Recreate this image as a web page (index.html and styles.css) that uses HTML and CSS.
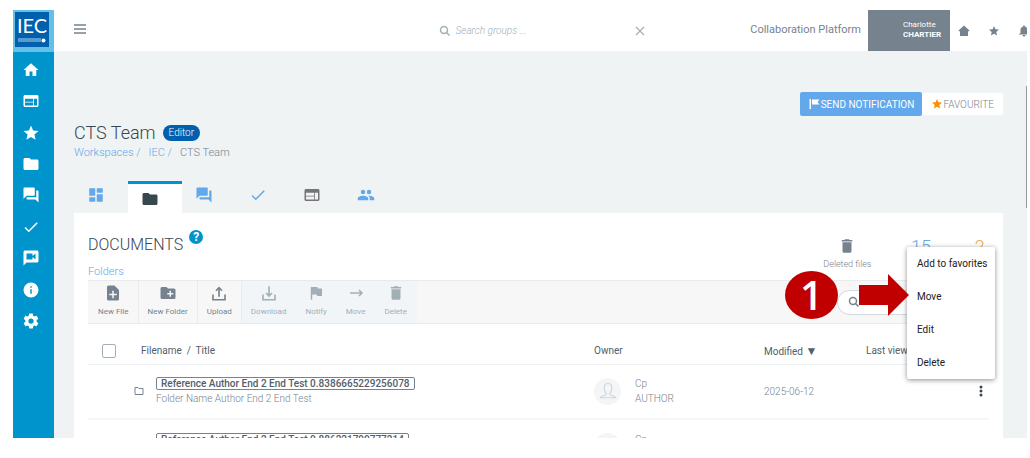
FILE: index.html
```html
<!DOCTYPE html>
<html lang="en">
<head>
    <meta charset="UTF-8">
    <meta name="viewport" content="width=device-width, initial-scale=1.0">
    <title>CTS Team - Collaboration Platform</title>
    <link rel="stylesheet" href="styles.css">
</head>
<body>
    <!-- Shared icons -->
    <svg class="icon-defs" aria-hidden="true">
        <symbol id="home" viewBox="0 0 24 24"><path d="M10 20v-6h4v6h5v-8h3L12 3 2 12h3v8z"/></symbol>
        <symbol id="web" viewBox="0 0 24 24"><path d="M20 4H4c-1.100 0-2 .9-2 2v12c0 1.100.9 2 2 2h16c1.100 0 2-.9 2-2V6c0-1.100-.9-2-2-2zm-5 14H4v-4h11v4zm0-5H4V9h11v4zm5 5h-4V9h4v9z"/></symbol>
        <symbol id="star" viewBox="0 0 24 24"><path d="M12 17.270 18.180 21l-1.640-7.030L22 9.240l-7.190-.61L12 2 9.190 8.630 2 9.240l5.460 4.730L5.820 21z"/></symbol>
        <symbol id="folder" viewBox="0 0 24 24"><path d="M10 4H4c-1.100 0-2 .9-2 2v12c0 1.100.9 2 2 2h16c1.100 0 2-.9 2-2V8c0-1.100-.9-2-2-2h-8z"/></symbol>
        <symbol id="forum" viewBox="0 0 24 24"><path d="M21 6h-2v9H6v2c0 .55.450 1 1 1h11l4 4V7c0-.55-.45-1-1-1zm-4 6V3c0-.55-.45-1-1-1H3c-.55 0-1 .45-1 1v14l4-4h10c.55 0 1-.45 1-1z"/></symbol>
        <symbol id="check" viewBox="0 0 24 24"><path d="M9 16.170 4.830 12l-1.420 1.410L9 19 21 7l-1.410-1.410z"/></symbol>
        <symbol id="video" viewBox="0 0 24 24"><path d="M20 2H4c-1.100 0-2 .9-2 2v18l4-4h14c1.100 0 2-.9 2-2V4c0-1.100-.9-2-2-2zm-2 12-4-3.200V14H6V6h8v3.200L18 6v8z"/></symbol>
        <symbol id="info" viewBox="0 0 24 24"><path d="M12 2a10 10 0 1 0 0 20 10 10 0 0 0 0-20zm1 15h-2v-6h2v6zm0-8h-2V7h2v2z"/></symbol>
        <symbol id="gear" viewBox="0 0 24 24"><path d="M19.430 12.980c.04-.32.070-.64.070-.98s-.03-.66-.07-.98l2.110-1.650c.19-.15.240-.42.120-.64l-2-3.460c-.12-.22-.39-.3-.61-.22l-2.490 1c-.52-.4-1.080-.73-1.690-.98l-.38-2.650C14.460 2.180 14.250 2 14 2h-4c-.25 0-.46.180-.49.420l-.38 2.650c-.61.250-1.170.590-1.690.980l-2.490-1c-.23-.09-.49 0-.61.220l-2 3.460c-.13.220-.07.490.12.640l2.110 1.650c-.04.320-.07.650-.07.980s.03.660.070.980l-2.110 1.650c-.19.150-.24.420-.12.640l2 3.460c.12.220.390.300.610.220l2.490-1c.52.400 1.080.730 1.690.980l.38 2.650c.03.240.240.420.490.420h4c.25 0 .46-.18.490-.42l.38-2.650c.61-.25 1.170-.59 1.690-.98l2.490 1c.23.090.490 0 .61-.22l2-3.460c.12-.22.070-.49-.12-.64l-2.110-1.650zM12 15.500a3.500 3.500 0 1 1 0-7 3.500 3.500 0 0 1 0 7z"/></symbol>
        <symbol id="dashboard" viewBox="0 0 24 24"><path d="M3 13h8V3H3v10zm0 8h8v-6H3v6zm10 0h8V11h-8v10zm0-18v6h8V3h-8z"/></symbol>
        <symbol id="people" viewBox="0 0 24 24"><path d="M16 11a3 3 0 1 0 0-6 3 3 0 0 0 0 6zm-8 0a3 3 0 1 0 0-6 3 3 0 0 0 0 6zm0 2c-2.330 0-7 1.170-7 3.500V19h14v-2.500C15 14.170 10.330 13 8 13zm8 0c-.29 0-.62.020-.97.050 1.160.84 1.970 1.970 1.970 3.450V19h6v-2.500c0-2.330-4.670-3.500-7-3.500z"/></symbol>
        <symbol id="new-file" viewBox="0 0 24 24"><path d="M14 2H6a2 2 0 0 0-2 2v16c0 1.100.9 2 2 2h12a2 2 0 0 0 2-2V8l-6-6zm3 13h-4v4h-2v-4H7v-2h4V9h2v4h4v2z"/></symbol>
        <symbol id="new-folder" viewBox="0 0 24 24"><path d="M20 6h-8l-2-2H4a2 2 0 0 0-2 2v12c0 1.100.9 2 2 2h16a2 2 0 0 0 2-2V8a2 2 0 0 0-2-2zm-1 8h-3v3h-2v-3h-3v-2h3V9h2v3h3v2z"/></symbol>
        <symbol id="upload" viewBox="0 0 24 24"><path d="M4 14v7h16v-7M12 17V5M8 9l4-4 4 4" fill="none" stroke="currentColor" stroke-width="2.200"/></symbol>
        <symbol id="download" viewBox="0 0 24 24"><path d="M4 14v7h16v-7M12 3v13M8 12l4 4 4-4" fill="none" stroke="currentColor" stroke-width="2.200"/></symbol>
        <symbol id="flag" viewBox="0 0 24 24"><path d="M14.400 6 14 4H5v17h2v-7h6l.4 2H20V6z"/></symbol>
        <symbol id="arrow" viewBox="0 0 24 24"><path d="M4 12h15M16 8l4 4-4 4" fill="none" stroke="currentColor" stroke-width="2"/></symbol>
        <symbol id="trash" viewBox="0 0 24 24"><path d="M6 19c0 1.100.9 2 2 2h8c1.100 0 2-.9 2-2V7H6v12zM19 4h-3.500l-1-1h-5l-1 1H5v2h14z"/></symbol>
        <symbol id="search" viewBox="0 0 24 24"><path d="M10 3a7 7 0 1 0 0 14 7 7 0 0 0 0-14zM15 15l6 6" fill="none" stroke="currentColor" stroke-width="3"/></symbol>
        <symbol id="bell" viewBox="0 0 24 24"><path d="M12 23a3 3 0 0 0 3-3H9a3 3 0 0 0 3 3zm7-7v-6c0-3.500-2-6-5.500-7V1h-3v2C7 4 5 6.500 5 10v6l-3 2v1h20v-1z"/></symbol>
        <symbol id="user" viewBox="0 0 24 24"><path d="M12 2c-4 0-5 3-5 6 0 4 2 7 3 8 0 2-7 2-8 5h20c-1-3-8-3-8-5 1-1 3-4 3-8 0-3-1-6-5-6z" fill="none" stroke="currentColor" stroke-width="1.500"/></symbol>
    </svg>

    <div class="app">
        <aside class="sidebar">
            <a class="logo" href="#" aria-label="IEC">
                <span class="logo-box">
                    <span class="logo-text">IEC</span>
                    <svg class="logo-line" viewBox="0 0 28 5"><path d="M0 1h23M0 3h23" stroke="#b5d3ee"/><circle cx="25.500" cy="2.500" r="2" fill="#fff"/></svg>
                </span>
            </a>
            <nav class="side-nav">
                <a href="#" aria-label="Home"><svg class="icon"><use href="#home"/></svg></a>
                <a href="#" aria-label="Workspaces"><svg class="icon"><use href="#web"/></svg></a>
                <a href="#" aria-label="Favourites"><svg class="icon"><use href="#star"/></svg></a>
                <a href="#" aria-label="Documents"><svg class="icon"><use href="#folder"/></svg></a>
                <a href="#" aria-label="Discussions"><svg class="icon"><use href="#forum"/></svg></a>
                <a href="#" aria-label="Tasks"><svg class="icon"><use href="#check"/></svg></a>
                <a href="#" aria-label="Meetings"><svg class="icon"><use href="#video"/></svg></a>
                <a href="#" aria-label="Information"><svg class="icon"><use href="#info"/></svg></a>
                <a href="#" aria-label="Settings"><svg class="icon"><use href="#gear"/></svg></a>
            </nav>
        </aside>

        <div class="page">
            <header class="topbar">
                <button class="burger" aria-label="Menu">
                    <svg viewBox="0 0 12 10"><path d="M0 1h12M0 5h12M0 9h12" stroke="currentColor" stroke-width="1.500"/></svg>
                </button>
                <form class="group-search">
                    <svg class="icon-small"><use href="#search"/></svg>
                    <input type="text" placeholder="Search groups ..." aria-label="Search groups">
                    <button type="button" aria-label="Clear">
                        <svg class="clear" viewBox="0 0 10 10"><path d="M1 1l8 8M9 1l-8 8" stroke="currentColor" stroke-width="1.200"/></svg>
                    </button>
                </form>
                <div class="platform">Collaboration Platform</div>
                <div class="user">Charlotte<strong>CHARTIER</strong></div>
                <div class="top-links">
                    <a href="#" aria-label="Home"><svg class="icon-small" viewBox="0 0 24 24"><path d="M12 1 1 11l1 2 2-1v10h16V12l2 1 1-2z"/></svg></a>
                    <a href="#" aria-label="Favourites"><svg class="icon-small"><use href="#star"/></svg></a>
                    <a href="#" aria-label="Notifications"><svg class="icon-small"><use href="#bell"/></svg></a>
                </div>
            </header>

            <main class="content">
                <div class="actions">
                    <button class="notify-button"><svg class="icon-small" viewBox="0 0 24 24"><path d="M3 2h3v20H3zM8 3h15l-4 5 4 5H8z"/></svg>SEND NOTIFICATION</button>
                    <button class="favourite-button"><svg class="icon-small"><use href="#star"/></svg>FAVOURITE</button>
                </div>
                <div class="heading">
                    <h1>CTS Team</h1>
                    <span class="badge">Editor</span>
                </div>
                <nav class="breadcrumb">
                    <a href="#">Workspaces /</a>
                    <a href="#">IEC /</a>
                    <span>CTS Team</span>
                </nav>

                <nav class="tabs">
                    <a href="#" aria-label="Dashboard"><svg class="icon"><use href="#dashboard"/></svg></a>
                    <a href="#" class="active" aria-label="Documents"><svg class="icon"><use href="#folder"/></svg></a>
                    <a href="#" aria-label="Discussions"><svg class="icon"><use href="#forum"/></svg></a>
                    <a href="#" aria-label="Tasks"><svg class="icon"><use href="#check"/></svg></a>
                    <a href="#" class="grey" aria-label="Pages"><svg class="icon"><use href="#web"/></svg></a>
                    <a href="#" aria-label="Members"><svg class="icon"><use href="#people"/></svg></a>
                </nav>

                <section class="card">
                    <div class="card-head">
                        <div>
                            <div class="card-title">
                                <h2>DOCUMENTS</h2>
                                <button class="help" aria-label="Help">?</button>
                            </div>
                            <a class="folders-link" href="#">Folders</a>
                        </div>
                        <div class="stats">
                            <div class="stat"><svg class="icon"><use href="#trash"/></svg><span>Deleted files</span></div>
                            <div class="stat"><b class="blue">15</b><span>Folders</span></div>
                            <div class="stat"><b class="orange">2</b><span>Files</span></div>
                        </div>
                    </div>

                    <div class="toolbar">
                        <button class="tool"><svg class="icon"><use href="#new-file"/></svg>New File</button>
                        <button class="tool"><svg class="icon"><use href="#new-folder"/></svg>New Folder</button>
                        <button class="tool"><svg class="icon"><use href="#upload"/></svg>Upload</button>
                        <button class="tool" disabled><svg class="icon"><use href="#download"/></svg>Download</button>
                        <button class="tool" disabled><svg class="icon"><use href="#flag"/></svg>Notify</button>
                        <button class="tool" disabled><svg class="icon"><use href="#arrow"/></svg>Move</button>
                        <button class="tool" disabled><svg class="icon"><use href="#trash"/></svg>Delete</button>
                        <label class="file-search">
                            <svg class="icon-small"><use href="#search"/></svg>
                            <input type="text" aria-label="Search files">
                        </label>
                    </div>

                    <table class="files">
                        <colgroup>
                            <col class="col-check"><col class="col-icon"><col><col class="col-owner"><col class="col-date"><col class="col-viewed"><col class="col-more">
                        </colgroup>
                        <thead>
                            <tr>
                                <th><input type="checkbox" aria-label="Select all"></th>
                                <th class="name-head" colspan="2">Filename &nbsp;/&nbsp; Title</th>
                                <th>Owner</th>
                                <th>Modified <span class="sort">▼</span></th>
                                <th>Last viewed</th>
                                <th></th>
                            </tr>
                        </thead>
                        <tbody>
                            <tr>
                                <td></td>
                                <td><svg class="folder-outline" viewBox="0 0 10 10"><path d="M1 1.500h3l1 1h4v6H1z"/></svg></td>
                                <td><a class="file-ref" href="#">Reference Author End 2 End Test 0.8386665229256078</a><div>Folder Name Author End 2 End Test</div></td>
                                <td><div class="owner"><span class="avatar"><svg class="icon"><use href="#user"/></svg></span><span>Cp<br>AUTHOR</span></div></td>
                                <td>2025-06-12</td>
                                <td></td>
                                <td><button class="more" aria-label="More actions"><svg viewBox="0 0 4 12"><circle cx="2" cy="2" r="1.500"/><circle cx="2" cy="6" r="1.500"/><circle cx="2" cy="10" r="1.500"/></svg></button></td>
                            </tr>
                            <tr>
                                <td></td>
                                <td><svg class="folder-outline" viewBox="0 0 10 10"><path d="M1 1.500h3l1 1h4v6H1z"/></svg></td>
                                <td><a class="file-ref" href="#">Reference Author End 2 End Test 0.886221790777214</a><div>Folder Name Author End 2 End Test</div></td>
                                <td><div class="owner"><span class="avatar"><svg class="icon"><use href="#user"/></svg></span><span>Cp<br>AUTHOR</span></div></td>
                                <td>2025-06-12</td>
                                <td></td>
                                <td><button class="more" aria-label="More actions"><svg viewBox="0 0 4 12"><circle cx="2" cy="2" r="1.500"/><circle cx="2" cy="6" r="1.500"/><circle cx="2" cy="10" r="1.500"/></svg></button></td>
                            </tr>
                        </tbody>
                    </table>
                </section>
            </main>
        </div>

        <div class="scroll-thumb"></div>

        <div class="step">
            <span class="step-number">1</span>
            <svg class="step-arrow" viewBox="0 0 50 42"><path d="M0 11h29V0l21 21-21 21V31H0z"/></svg>
        </div>

        <div class="menu">
            <button>Add to favorites</button>
            <button>Move</button>
            <button>Edit</button>
            <button>Delete</button>
        </div>
    </div>
</body>
</html>
```
FILE: styles.css
```css
:root {
    --blue: #0094cd;
    --dark-blue: #0060ae;
    --link: #62a8ea;
    --grey: #76838f;
    --dark: #37474f;
    --bg: #eff3f4;
    --red: #c00000;
}

* {
    box-sizing: border-box;
}

body {
    margin: 0;
    height: 100vh;
    padding: 10px 3px 20px 13px;
    background: #fff;
    color: var(--grey);
    font-family: Roboto, sans-serif;
    font-size: 10px;
    font-weight: 300;
    line-height: 15px;
}

a {
    color: var(--link);
    text-decoration: none;
}

button,
input {
    font: inherit;
    color: inherit;
}

button {
    padding: 0;
    border: 0;
    background: none;
    cursor: pointer;
}

svg {
    display: block;
    flex: none;
    fill: currentColor;
}

.icon-defs {
    display: none;
}

.icon {
    width: 18px;
    height: 18px;
}

.icon-small {
    width: 12px;
    height: 12px;
}

.app {
    position: relative;
    display: flex;
    height: 100%;
    overflow: hidden;
    background: var(--bg);
}

/* Sidebar */
.sidebar {
    flex: none;
    width: 41px;
    background: var(--blue);
}

.logo {
    display: block;
    padding: 2px 5px 5px 2px;
    height: 42px;
    background: #66c0e6;
}

.logo-box {
    display: flex;
    flex-direction: column;
    align-items: center;
    height: 35px;
    background: var(--dark-blue);
    color: #fff;
}

.logo-text {
    font-family: Lato, sans-serif;
    font-size: 20px;
    font-weight: 400;
    line-height: 26px;
}

.logo-line {
    width: 28px;
    height: 5px;
}

.side-nav {
    display: grid;
    grid-template-rows: repeat(9, 1fr);
    height: 283px;
    margin-top: 2px;
}

.side-nav a {
    display: flex;
    align-items: center;
    justify-content: center;
    padding-right: 5px;
    color: #fff;
}

.page {
    flex: 1;
    min-width: 0;
}

/* Top bar */
.topbar {
    display: flex;
    align-items: center;
    height: 41px;
    padding-left: 20px;
    background: #fff;
}

.burger {
    padding-bottom: 4px;
}

.burger svg {
    width: 12px;
    height: 10px;
}

.group-search {
    display: flex;
    align-items: center;
    gap: 5px;
    width: 206px;
    margin: 0 auto 0 37%;
    color: #a3afb7;
}

.group-search input {
    flex: 1;
    min-width: 0;
    padding: 0;
    border: 0;
    font-style: italic;
    outline: none;
}

input::placeholder {
    color: #a3afb7;
    opacity: 1;
}

.group-search button {
    color: #a3afb7;
}

.clear {
    width: 10px;
    height: 10px;
}

.platform {
    padding: 0 7px 3px 0;
    font-size: 11px;
    font-weight: 400;
}

.user {
    align-self: stretch;
    display: flex;
    flex-direction: column;
    justify-content: center;
    width: 82px;
    padding: 0 0 2px 35px;
    background: var(--grey);
    color: #fff;
    font-size: 8px;
    font-weight: 400;
    line-height: 10px;
}

.user strong {
    font-weight: 700;
}

.top-links {
    display: flex;
    gap: 18px;
    padding-left: 8px;
    margin-right: -3px;
}

.top-links a {
    color: var(--grey);
}

/* Content */
.content {
    padding: 41px 24px 0 20px;
}

.actions {
    display: flex;
    justify-content: flex-end;
    align-items: center;
}

.actions button {
    display: flex;
    align-items: center;
    justify-content: center;
    height: 24px;
    padding: 0 8px;
    border-radius: 2px;
}

.actions .notify-button {
    gap: 1px;
    background: var(--link);
    color: #fff;
    font-weight: 400;
}

.actions .favourite-button {
    height: 22px;
    padding: 0 9px;
    background: #fff;
}

.favourite-button svg {
    color: #ff8f00;
}

.heading {
    display: flex;
    align-items: center;
    gap: 7px;
    margin-top: 5px;
}

h1,
h2 {
    margin: 0;
    color: var(--dark);
    font-size: 18px;
    font-weight: 300;
    line-height: 24px;
}

h2 {
    font-size: 16px;
}

.badge {
    padding: 0 6px;
    border-radius: 8px;
    background: var(--dark-blue);
    color: #fff;
    line-height: 16px;
}

.breadcrumb {
    display: flex;
    gap: 8px;
    font-size: 11px;
}

.tabs {
    display: flex;
    margin-top: 21px;
}

.tabs a {
    display: flex;
    align-items: center;
    justify-content: center;
    width: 54px;
    height: 32px;
    padding: 0 10px 4px 0;
}

.tabs .active {
    padding-bottom: 0;
    border-top: 3px solid var(--blue);
    background: #fff;
    color: var(--dark);
}

.tabs .grey {
    color: #757575;
}

.card {
    padding: 20px 14px 0;
    background: #fff;
}

.card-head {
    display: flex;
    justify-content: space-between;
}

.card-title {
    display: flex;
    gap: 6px;
}

.help {
    width: 14px;
    height: 14px;
    margin-top: -3px;
    border-radius: 50%;
    background: var(--blue);
    color: #fff;
    font-size: 12px;
    font-weight: 700;
    line-height: 14px;
}

.folders-link {
    display: block;
    margin-top: 7px;
    font-size: 11px;
}

.stats {
    display: flex;
    gap: 35px;
    padding-top: 4px;
    font-size: 9px;
}

.stat {
    display: flex;
    flex-direction: column;
    align-items: center;
}

.stat svg,
.stat b {
    margin-bottom: 2px;
}

.stat b {
    height: 18px;
    font-size: 18px;
    font-weight: 300;
    line-height: 20px;
}

.blue {
    color: var(--link);
}

.orange {
    color: #f2a654;
}

/* Toolbar */
.toolbar {
    display: flex;
    align-items: stretch;
    height: 44px;
    margin-top: 1px;
    padding-left: 1px;
    border: 1px solid #e8ebed;
    border-width: 1px 0;
    background: #f7f7f7;
}

.tool {
    display: flex;
    flex-direction: column;
    align-items: center;
    gap: 2px;
    padding: 3px 9px 0;
    border-right: 1px solid #e8ecee;
    font-size: 8px;
    font-weight: 400;
}

.tool:disabled {
    border-color: transparent;
    background: #f1f5f7;
    color: #a3afb7;
}

.file-search {
    display: flex;
    align-items: center;
    align-self: center;
    gap: 6px;
    width: 142px;
    height: 25px;
    margin: 0 10px 0 auto;
    padding: 0 10px;
    border: 1px solid #d3dadd;
    border-radius: 13px;
    background: #fff;
}

.file-search input {
    flex: 1;
    min-width: 0;
    padding: 0;
    border: 0;
    outline: none;
}

/* Files table */
.files {
    width: 100%;
    table-layout: fixed;
    border-collapse: collapse;
}

.col-check {
    width: 46px;
}

.col-icon {
    width: 22px;
}

.col-owner {
    width: 170px;
}

.col-date {
    width: 102px;
}

.col-viewed {
    width: 106px;
}

.col-more {
    width: 17px;
}

.files th,
.files td {
    padding: 0;
    text-align: left;
}

.files th {
    height: 40px;
    padding-top: 15px;
    border-bottom: 1px solid #eef2f3;
    color: #526069;
    font-weight: 400;
    line-height: 14px;
}

.files .name-head {
    padding-left: 7px;
}

.sort {
    font-size: 12px;
}

.files td {
    height: 55px;
    border-bottom: 2px solid #f5f6f7;
}

.files input {
    appearance: none;
    display: block;
    width: 14px;
    height: 14px;
    margin: 0 0 0 14px;
    border: 1px solid #a3afb7;
    border-radius: 2px;
}

.file-ref {
    display: inline-block;
    padding: 0 4px;
    border: 1px solid var(--grey);
    border-radius: 2px;
    color: #526069;
    font-weight: 500;
    line-height: 11px;
}

.folder-outline {
    width: 10px;
    height: 10px;
    fill: none;
    stroke: currentColor;
}

.owner {
    display: flex;
    align-items: center;
    gap: 14px;
}

.avatar {
    display: flex;
    align-items: center;
    justify-content: center;
    width: 27px;
    height: 27px;
    border-radius: 50%;
    background: #f3f5f7;
    color: #cfd6da;
}

.more {
    display: block;
    margin-left: 7px;
    color: var(--dark);
}

.more svg {
    width: 4px;
    height: 12px;
}

/* Overlays */
.scroll-thumb {
    position: absolute;
    top: 76px;
    right: 0;
    width: 1px;
    height: 122px;
    background: #9a9a9a;
}

.menu {
    position: absolute;
    top: 237px;
    right: 32px;
    display: flex;
    flex-direction: column;
    width: 88px;
    border-radius: 2px;
    background: #fff;
    box-shadow: 0 1px 5px rgba(0, 0, 0, 0.45);
}

.menu button {
    height: 33px;
    padding-left: 10px;
    color: #212121;
    font-weight: 400;
    text-align: left;
}

.step {
    position: absolute;
    top: 261px;
    right: 118px;
    z-index: 1;
    display: flex;
    align-items: center;
    gap: 21px;
}

.step-number {
    width: 53px;
    height: 48px;
    border-radius: 50%;
    background: var(--red);
    color: #fff;
    font-family: "Open Sans", sans-serif;
    font-size: 40px;
    font-weight: 600;
    line-height: 48px;
    text-align: center;
}

.step-arrow {
    width: 50px;
    height: 42px;
    fill: var(--red);
}
```
